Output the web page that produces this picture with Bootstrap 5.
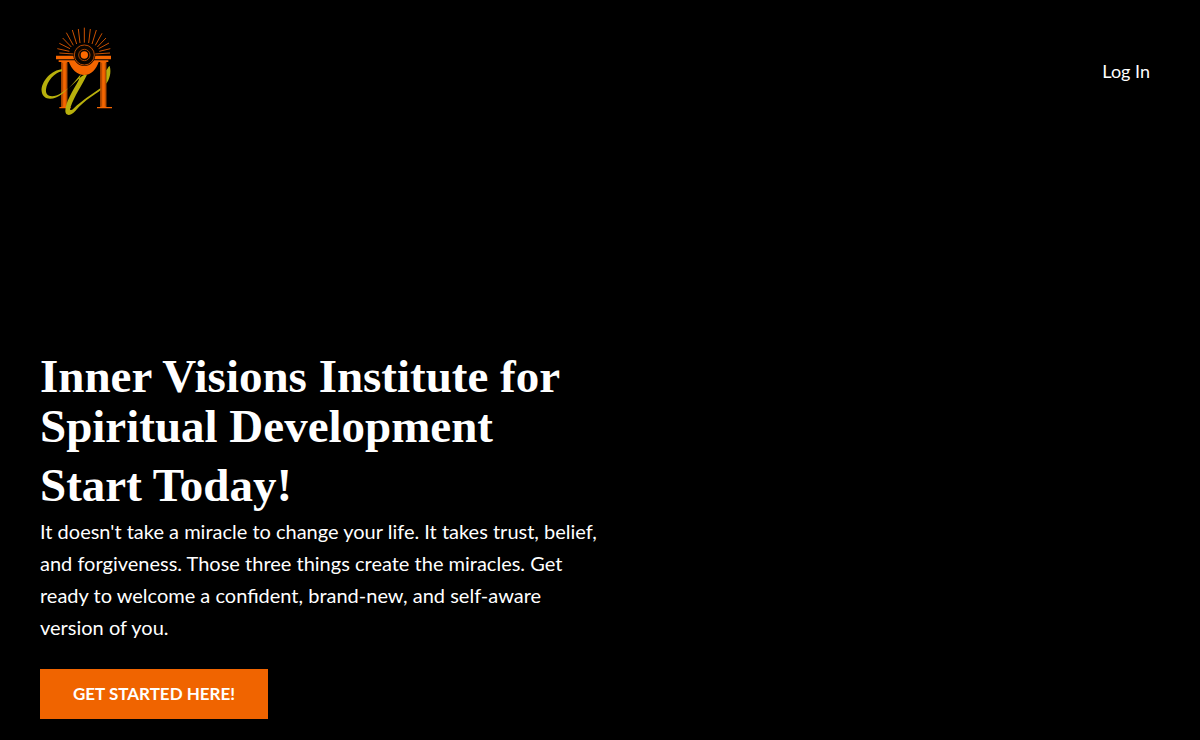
<!DOCTYPE html>
<html lang="en">
<head>
<meta charset="utf-8">
<meta name="viewport" content="width=device-width, initial-scale=1">
<title>Inner Visions Institute for Spiritual Development</title>
<link href="https://cdn.jsdelivr.net/npm/bootstrap@5.3.0/dist/css/bootstrap.min.css" rel="stylesheet">
<style>
  body { background: #000; color: #fff; font-family: Lato, sans-serif; }
  .site-header { padding: 23px 40px; }
  .site-logo { width: 76px; height: 96px; }
  .login-link { font-size: 18px; line-height: 28px; padding: 0 10px; }
  .hero { padding: 209px 40px 20px; }
  .hero-copy { max-width: 560px; }
  .hero h1, .hero h2 { font-family: "Liberation Serif", serif; font-weight: 700; font-size: 47px; line-height: 50px; }
  .hero h1 { margin-bottom: 9px; }
  .hero h2 { margin-bottom: 5px; }
  .hero p { font-size: 20px; line-height: 32px; margin-bottom: 26px; }
  .btn-start { --bs-btn-color: #fff; --bs-btn-bg: #f06400; --bs-btn-hover-color: #fff; --bs-btn-hover-bg: #d65900;
    --bs-btn-border-width: 0; --bs-btn-font-weight: 700; font-size: 17px; line-height: 26px; padding: 12px 33px; }
</style>
</head>
<body>
<header class="site-header d-flex justify-content-between align-items-center">
  <a href="#" aria-label="Inner Visions home">
    <svg class="site-logo d-block" viewBox="30 9 228 288" aria-hidden="true">
      <g stroke="#c85000" stroke-width="3" fill="none">
        <path d="M163 68V23M150 69L145 27M176 69L181 27M140 72L127 30M186 72L199 30M130 76L109 38M196 76L216 40M124 81L98 54M202 81L228 54M120 86L88 70M206 86L237 69M118 94L82 86M208 94L241 86M132 102L88 99M194 102L240 99"/>
      </g>
      <g fill="#f56600">
        <path d="M78 107H243V118H78ZM86 121H235V126H86Z"/>
        <path d="M94 124H112V262H94ZM211 124H229V262H211ZM88 261H122V265H88ZM201 261H246V265H201ZM116 124H207C198 149 184 165 163 165C141 165 125 149 116 124Z"/>
      </g>
      <path d="M98 128V260M109 128V260M215 128V260M226 128V260" stroke="#6b2b00" stroke-width="1.5"/>
      <g fill="#b8b00c">
        <path d="M96 148C67 149 32 184 35 214C38 242 71 242 96 222C126 198 142 174 153 163L146 181C131 209 105 248 106 274C107 289 122 288 136 273C166 237 200 222 211 211V205C185 223 160 239 130 266C121 274 118 270 122 260C133 228 157 194 171 164L162 165C148 171 126 201 94 219C68 236 45 230 48 208C51 184 73 158 96 154Z"/>
        <path d="M229 151C235 144 237 136 239 139C245 157 238 180 229 191Z"/>
      </g>
      <circle cx="163" cy="105" r="33" fill="#0b0500"/>
      <circle cx="163" cy="105" r="30" fill="none" stroke="#b64800" stroke-width="3"/>
      <circle cx="163" cy="105" r="17" fill="none" stroke="#a34200" stroke-width="3"/>
      <circle cx="163" cy="105" r="11" fill="#ff6a00"/>
    </svg>
  </a>
  <a href="#" class="login-link text-white text-decoration-none">Log In</a>
</header>
<main class="hero">
  <div class="hero-copy">
    <h1>Inner Visions Institute for Spiritual Development</h1>
    <h2>Start Today!</h2>
    <p>It doesn't take a miracle to change your life. It takes trust, belief, and forgiveness. Those three things create the miracles. Get ready to welcome a confident, brand-new, and self-aware version of you.</p>
    <button type="button" class="btn btn-start rounded-0">GET STARTED HERE!</button>
  </div>
</main>
<script src="https://cdn.jsdelivr.net/npm/bootstrap@5.3.0/dist/js/bootstrap.bundle.min.js"></script>
</body>
</html>
